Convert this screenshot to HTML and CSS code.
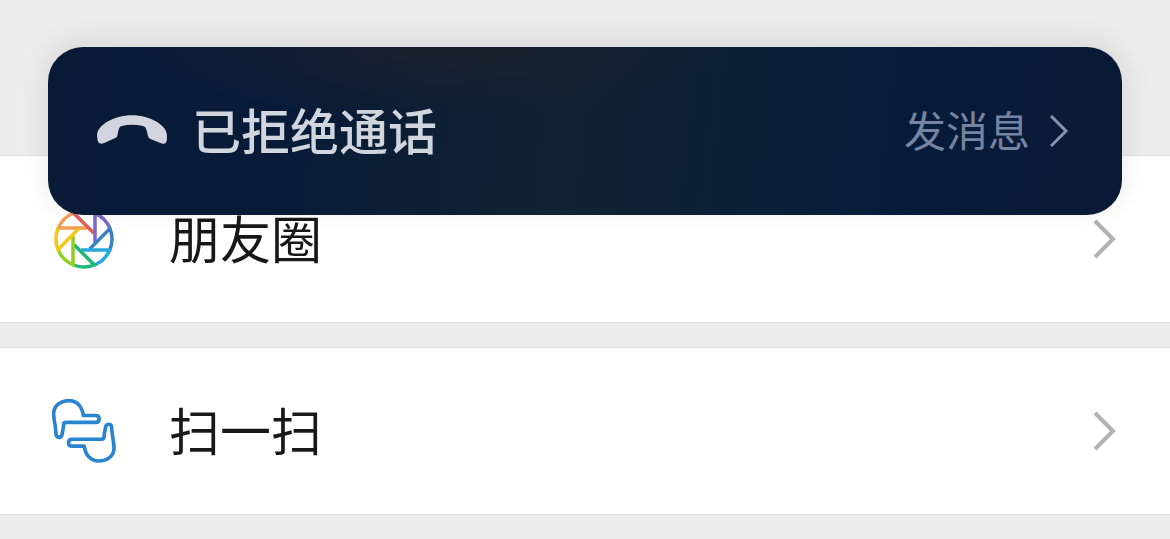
FILE: index.html
```html
<!DOCTYPE html>
<html lang="zh-CN">
<head>
<meta charset="utf-8">
<meta name="viewport" content="width=device-width, initial-scale=1">
<title>发现</title>
<link rel="stylesheet" href="styles.css">
</head>
<body>
<aside class="banner" role="status">
  <svg class="banner-phone" viewBox="35 58 212 100" aria-hidden="true">
    <path d="M35 120C35 90 85 59 141 59C197 59 247 90 247 120V131C246 144 240 148 231 144L197 131Q190 127 189 120Q187 106 182 97Q180 92 174 91Q141 84 110 91Q104 92 102 98Q99 106 97 119Q96 125 90 128L57 143C44 148 37 143 36 130Z"/>
  </svg>
  <span class="banner-title">已拒绝通话</span>
  <a class="banner-action" href="#message">
    <span class="banner-action-text">发消息</span>
    <svg class="banner-chevron" viewBox="0 0 20 34" aria-hidden="true"><path d="M1 2L16 17L1 32"/></svg>
  </a>
</aside>
<main class="page">
  <nav class="list">
    <a class="row" href="#moments">
      <svg class="row-icon" viewBox="-32 -32 64 64" aria-hidden="true">
        <defs><path id="blade" d="M3 -11H-25.7A28 28 0 0 1 -10.4 -26"/></defs>
        <g class="pinwheel">
          <use href="#blade" class="orange"/>
          <use href="#blade" class="red" transform="rotate(45)"/>
          <use href="#blade" class="purple" transform="rotate(90)"/>
          <use href="#blade" class="blue" transform="rotate(135)"/>
          <use href="#blade" class="sky" transform="rotate(180)"/>
          <use href="#blade" class="green" transform="rotate(225)"/>
          <use href="#blade" class="lime" transform="rotate(270)"/>
          <use href="#blade" class="yellow" transform="rotate(315)"/>
        </g>
      </svg>
      <span class="row-label">朋友圈</span>
      <svg class="row-chevron" viewBox="0 0 24 40" aria-hidden="true"><path d="M3 2L21 20L3 38"/></svg>
    </a>
    <a class="row" href="#scan">
      <svg class="row-icon" viewBox="36 26 194 194" aria-hidden="true">
        <defs><path id="hand" d="M131 76H168Q179 76 179 86.500Q179 97 168 97H79Q71 97 71 105C71 117 68 121 67 131C66 146 49 146 48 132C48 112 41 90 41 69C42 46 61 31 88 31C112 31 128 50 131 76Z"/></defs>
        <g class="hands">
          <use href="#hand"/>
          <use href="#hand" transform="rotate(180 132.500 122.500)"/>
        </g>
      </svg>
      <span class="row-label">扫一扫</span>
      <svg class="row-chevron" viewBox="0 0 24 40" aria-hidden="true"><path d="M3 2L21 20L3 38"/></svg>
    </a>
  </nav>
</main>
</body>
</html>
```

FILE: styles.css
```css
* {
  box-sizing: border-box;
}

body {
  margin: 0;
  background: #ececec;
  color: #181818;
  font-family: "Noto Sans CJK SC", sans-serif;
}

a {
  color: inherit;
  text-decoration: none;
}

svg {
  flex: none;
  fill: none;
}

.page {
  padding: 155px 0 24px;
}

.list {
  display: flex;
  flex-direction: column;
  gap: 24px;
}

.row {
  display: flex;
  align-items: center;
  min-height: 168px;
  padding: 0 54px 0 52px;
  border-top: 1px solid #e2e2e2;
  border-bottom: 1px solid #e0e0e0;
  background: #fff;
}

.row-icon {
  width: 64px;
  height: 64px;
}

.row-label {
  flex: 1;
  margin-left: 53px;
  padding-bottom: 4px;
  font-size: 51px;
  line-height: 72px;
}

.row-chevron {
  width: 24px;
  height: 40px;
  stroke: #b2b2b2;
  stroke-width: 4;
}

.pinwheel {
  stroke-width: 3.5;
}

.orange { stroke: #f5a050; }
.red { stroke: #e06058; }
.purple { stroke: #7b68c8; }
.blue { stroke: #3b82c4; }
.sky { stroke: #25a9e0; }
.green { stroke: #1fb878; }
.lime { stroke: #8fd022; }
.yellow { stroke: #f3c713; }

.hands {
  stroke: #2b84cf;
  stroke-width: 11;
  stroke-linejoin: round;
}

.banner {
  position: absolute;
  top: 47px;
  left: 48px;
  right: 48px;
  display: flex;
  align-items: center;
  min-height: 168px;
  padding: 0 52px 0 49px;
  border-radius: 35px;
  background:
    radial-gradient(ellipse at 36% 0, rgba(30, 32, 44, 0.9) 0, rgba(30, 32, 44, 0) 30%),
    linear-gradient(97deg, #081a36 0, #071b39 22%, #0c1f34 36%, #112231 48%, #0d2034 58%, #082039 70%, #061b3a 80%, #0a1a35 100%);
  box-shadow: 0 -6px 30px rgba(0, 0, 0, 0.09);
  color: #d0d5de;
}

.banner-phone {
  width: 70px;
  height: 33px;
  fill: #d2d4e0;
}

.banner-title {
  flex: 1;
  margin-left: 25px;
  padding-bottom: 4px;
  font-size: 49px;
  font-weight: 500;
  line-height: 72px;
}

.banner-action {
  display: flex;
  align-items: center;
  gap: 20px;
  color: #7584a0;
  font-size: 42px;
  line-height: 60px;
}

.banner-action-text {
  padding-bottom: 4px;
}

.banner-chevron {
  width: 20px;
  height: 34px;
  stroke: #8794ac;
  stroke-width: 3;
}
```
